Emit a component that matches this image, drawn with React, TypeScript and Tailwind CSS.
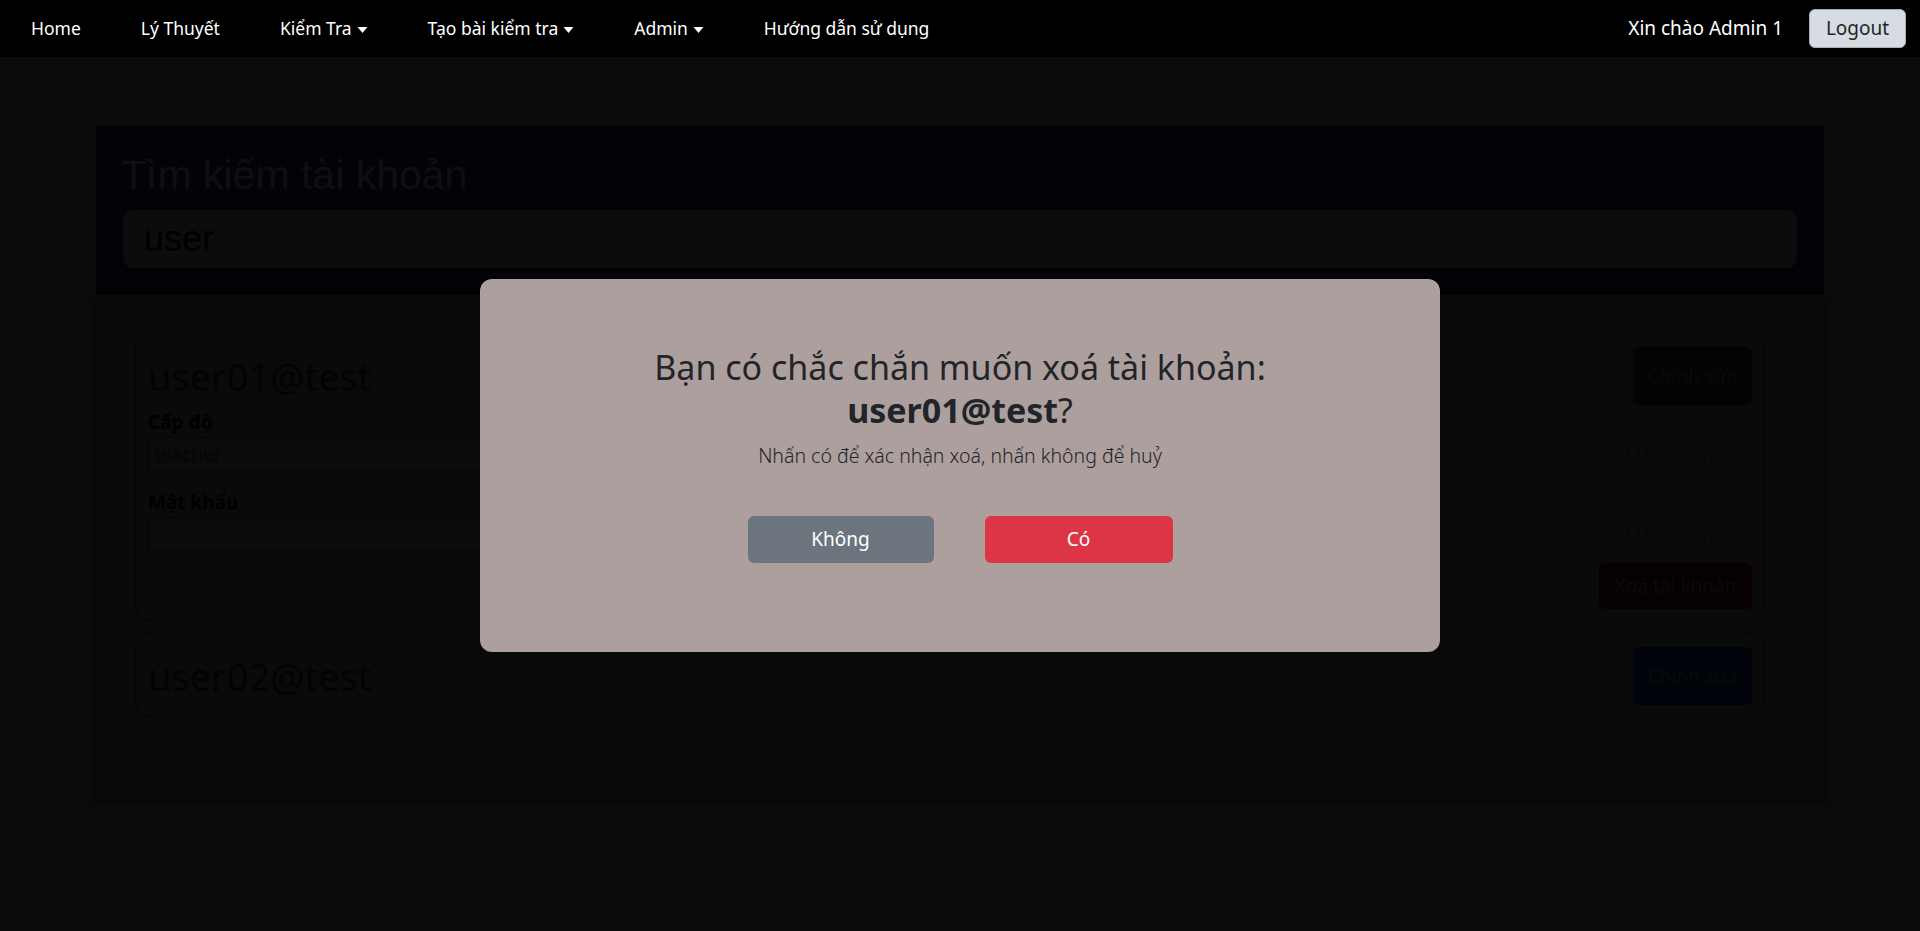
const links = [
  { label: 'Home' },
  { label: 'Lý Thuyết' },
  { label: 'Kiểm Tra', caret: true },
  { label: 'Tạo bài kiểm tra', caret: true },
  { label: 'Admin', caret: true },
  { label: 'Hướng dẫn sử dụng' },
];

function Caret() {
  return (
    <svg viewBox="0 0 10 7" className="w-[11px] h-[8px] mt-[2px]" fill="currentColor">
      <path d="M0.5 0.8 H9.5 L5 6.2 Z" />
    </svg>
  );
}

function Card({ name, edit, children }: { name: string; edit: string; children?: React.ReactNode }) {
  return (
    <div className="w-[1630px] rounded-[14px] border border-[#050505] bg-[#0a0a0a] px-[12px] pt-[13px] pb-[11px]">
      <div className="flex items-center justify-between">
        <h3 className="text-[38px] leading-[48px] text-[#030303]">{name}</h3>
        <button className={`w-[119px] h-[58px] rounded-[6px] text-[19px] text-[#090909] ${edit}`}>Chỉnh sửa</button>
      </div>
      {children}
    </div>
  );
}

function Field({ label, value }: { label: string; value: string }) {
  return (
    <>
      <div className="font-bold text-[19px] leading-[30px] text-black">{label}</div>
      <div className="flex items-center gap-[210px]">
        <div className="flex-1 h-[35px] border border-[#060606] bg-[#0b0b0b] px-[5px] text-[19px] leading-[33px] text-[#050505]">
          {value}
        </div>
        <span className="whitespace-nowrap text-[19px] text-[#070707]">Lưu chỉnh sửa</span>
      </div>
    </>
  );
}

export default function App() {
  return (
    <div className="min-h-[931px] bg-[#0b0b0b] font-['Noto_Sans',sans-serif]">
      <nav className="h-[57px] bg-black flex items-center justify-between text-white text-[17.5px]">
        <div className="flex items-center pl-[1px]">
          {links.map((l, idx) => (
            <a key={idx} className="px-[30px] flex items-center gap-[5px]">
              {l.label}
              {l.caret && <Caret />}
            </a>
          ))}
        </div>
        <div className="flex items-center gap-[26px] pr-[14px]">
          <span className="text-[19px]">Xin chào Admin 1</span>
          <button className="h-[39px] w-[97px] rounded-[6px] bg-[#d6dce1] border border-[#a9afb4] text-[#212529] text-[19px]">
            Logout
          </button>
        </div>
      </nav>

      <main className="mx-[96px] pt-[68px]">
        <section className="bg-[#020307] px-[25px] pt-[26px] pb-[27px] font-['Liberation_Sans',Arial,sans-serif]">
          <h1 className="text-[41px] leading-[48px] text-[#0f0f10] mb-[11px]">Tìm kiếm tài khoản</h1>
          <div className="mx-[2px] h-[58px] rounded-[10px] bg-[#0c0c0c] pl-[21px] flex items-center text-[36px] text-black">
            user
          </div>
        </section>

        <section className="h-[505px] overflow-scroll bg-[#0a0a0a] pl-[39px] pt-[38px] shadow-[0_2px_6px_rgba(0,0,0,0.6)] [scrollbar-color:#080808_#0b0b0b]">
          <Card name="user01@test" edit="bg-[#020402]">
            <div className="mt-[2px]">
              <Field label="Cấp độ" value="teacher" />
            </div>
            <div className="mt-[15px]">
              <Field label="Mật khẩu" value="" />
            </div>
            <div className="flex justify-end mt-[11px]">
              <button className="w-[153px] h-[46px] rounded-[6px] bg-[#070000] text-[19px] text-[#0a0a0a] shadow-[0_0_0_3px_#0c0909]">
                Xoá tài khoản
              </button>
            </div>
          </Card>
          <div className="mt-[12px]">
            <Card name="user02@test" edit="bg-[#00040a]" />
          </div>
        </section>
      </main>

      <div className="fixed inset-0 flex items-center justify-center">
        <div className="w-[960px] h-[373px] rounded-[12px] bg-[#ae9f9f] pt-[67px] flex flex-col items-center text-[#212529]">
          <h2 className="text-[34px] leading-[43px] text-center">
            Bạn có chắc chắn muốn xoá tài khoản:
            <br />
            <b>user01@test</b>?
          </h2>
          <p className="mt-[9px] text-[19.5px] leading-[30px] font-light">Nhấn có để xác nhận xoá, nhấn không để huỷ</p>
          <div className="mt-[45px] flex gap-[51px]">
            <button className="w-[186px] h-[47px] rounded-[6px] bg-[#6c757d] text-white text-[19px]">Không</button>
            <button className="w-[188px] h-[47px] rounded-[6px] bg-[#dc3545] text-white text-[19px]">Có</button>
          </div>
        </div>
      </div>
    </div>
  );
}
